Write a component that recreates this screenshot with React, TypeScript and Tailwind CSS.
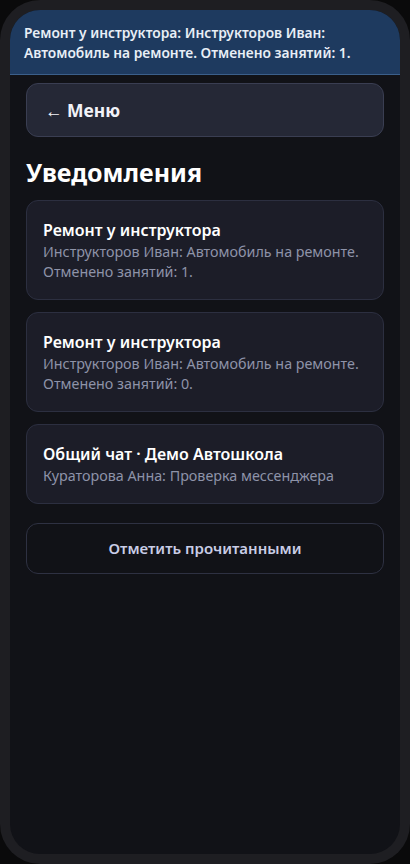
const notifications = [
  {
    title: "Ремонт у инструктора",
    body: "Инструкторов Иван: Автомобиль на ремонте. Отменено занятий: 1.",
  },
  {
    title: "Ремонт у инструктора",
    body: "Инструкторов Иван: Автомобиль на ремонте. Отменено занятий: 0.",
  },
  {
    title: "Общий чат · Демо Автошкола",
    body: "Кураторова Анна: Проверка мессенджера",
  },
];

export default function App() {
  return (
    <div
      className="h-[864px] w-[410px] bg-[#0a0a0b]"
      style={{ fontFamily: '"Noto Sans", "Open Sans", sans-serif' }}
    >
      <div className="h-full w-full rounded-[40px] bg-[#1e1e22] p-[10px]">
        <div className="flex h-full flex-col overflow-hidden rounded-[30px] bg-[#111217]">
          <div className="border-b border-[#3b5f8a] bg-[#1e3a5f] px-[14px] pb-[11px] pt-[13px] text-[13.8px] font-semibold leading-[20px] text-[#e8eef6]">
            Ремонт у инструктора: Инструкторов Иван: Автомобиль на ремонте.
            Отменено занятий: 1.
          </div>

          <div className="flex flex-col px-4 pt-2">
            <button className="flex h-[54px] items-center rounded-xl border border-[#3a3e52] bg-[#252836] px-[18px] text-left text-[17.5px] font-bold text-[#f1f2f8]">
              ← Меню
            </button>

            <h1 className="mt-[19px] text-[25px] font-bold leading-[32px] text-white">
              Уведомления
            </h1>

            <div className="mt-3 flex flex-col gap-3">
              {notifications.map((n, i) => (
                <div
                  key={i}
                  className="rounded-xl border border-[#2c2f40] bg-[#1c1d28] px-4 py-[17px]"
                >
                  <div className="text-[16px] font-semibold leading-[24px] text-white">
                    {n.title}
                  </div>
                  <div className="text-[14.3px] leading-[20px] text-[#8e93a8]">
                    {n.body}
                  </div>
                </div>
              ))}
            </div>

            <button className="mt-[19px] h-[51px] rounded-xl border border-[#2e3142] bg-[#111217] text-[15px] font-semibold text-[#c9cde6]">
              Отметить прочитанными
            </button>
          </div>
        </div>
      </div>
    </div>
  );
}
